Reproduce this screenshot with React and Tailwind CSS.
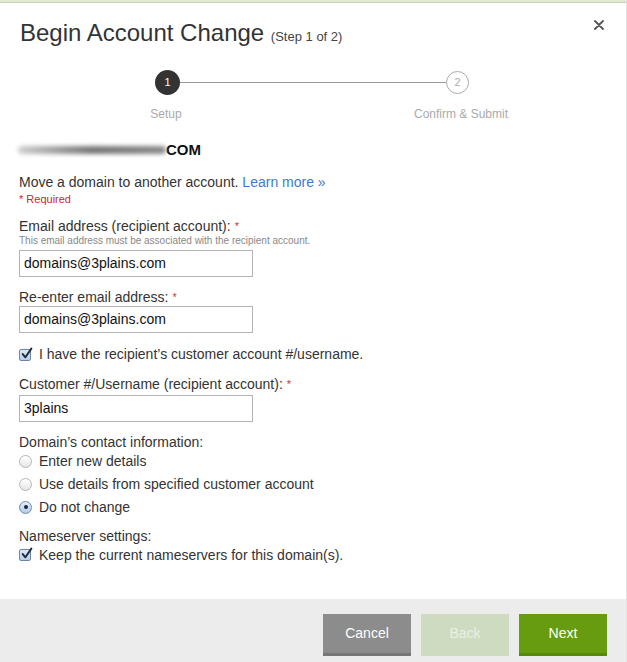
import React from "react";

function Checkbox() {
  return (
    <span className="relative inline-block w-[12px] h-[12px] rounded-[2px] border border-[#6d87a8] bg-gradient-to-b from-[#dbe7f6] to-[#b9cfe9] shrink-0">
      <svg viewBox="0 0 12 12" className="absolute -top-[3px] left-[0px] w-[13px] h-[13px]">
        <path d="M2.5 6.5 L5 9.5 L10.5 1.5" fill="none" stroke="#1d2a3d" strokeWidth="1.8" strokeLinecap="round" strokeLinejoin="round" />
      </svg>
    </span>
  );
}

function Radio({ checked }) {
  return (
    <span
      className={`inline-flex items-center justify-center w-[13px] h-[13px] rounded-full border shrink-0 ${
        checked
          ? "border-[#6b8cb8] bg-gradient-to-b from-[#e3edf9] to-[#b5cbe6]"
          : "border-[#b5b5b5] bg-gradient-to-b from-[#ffffff] to-[#e6e6e6]"
      }`}
    >
      {checked && <span className="w-[4px] h-[4px] rounded-full bg-[#1c2633]" />}
    </span>
  );
}

function TextInput({ value, className = "" }) {
  return (
    <div className={`w-[234px] h-[27px] border border-[#b4b4b4] px-[4px] flex items-center text-[14px] text-[#111] ${className}`}>
      {value}
    </div>
  );
}

function Label({ children, required }) {
  return (
    <p className="text-[14px] leading-[18px] text-[#333]">
      {children}
      {required && <span className="text-[#c33] text-[11px] align-top ml-[4px]">*</span>}
    </p>
  );
}

export default function App() {
  return (
    <div
      className="w-[627px] h-[662px] bg-white flex flex-col border-r border-[#e2e2e2]"
      style={{ fontFamily: '"Liberation Sans", Arial, sans-serif' }}
    >
      <div className="h-[3px] bg-[#e1ebd2] border-b border-[#c7cfbf]" />

      {/* Header */}
      <div className="flex items-start justify-between pl-[20px] pr-[22px] pt-[14px]">
        <h1 className="text-[24px] leading-[32px] text-[#333] font-light">
          Begin Account Change{" "}
          <span className="text-[13px] text-[#444]">(Step 1 of 2)</span>
        </h1>
        <svg viewBox="0 0 10 10" className="w-[10px] h-[10px] mt-[3px]">
          <path d="M1 1 L9 9 M9 1 L1 9" stroke="#555" strokeWidth="1.8" strokeLinecap="round" />
        </svg>
      </div>

      {/* Stepper */}
      <div className="flex items-center pl-[155px] mt-[17px]">
        <span className="w-[25px] h-[25px] rounded-full bg-[#333] text-white text-[11px] flex items-center justify-center">1</span>
        <span className="w-[266px] h-px bg-[#9a9a9a]" />
        <span className="w-[23px] h-[23px] rounded-full border border-[#aaa] text-[#aaa] text-[11px] flex items-center justify-center">2</span>
      </div>
      <div className="flex mt-[11px] text-[12px] leading-[16px] text-[#aaa]">
        <span className="ml-[116px] w-[100px] text-center">Setup</span>
        <span className="ml-[185px] w-[120px] text-center">Confirm &amp; Submit</span>
      </div>

      {/* Form */}
      <div className="px-[19px] mt-[18px]">
        <div className="flex items-center h-[20px]">
          <span className="w-[148px] h-[8px] rounded-full bg-gradient-to-r from-[#cfcfcf] via-[#767676] to-[#8a8a8a] blur-[2px] -ml-[1px]" />
          <span className="text-[15px] font-bold text-[#111]">COM</span>
        </div>

        <p className="text-[14px] leading-[18px] text-[#333] mt-[13px]">
          Move a domain to another account.{" "}
          <span className="text-[#3a7bd5]">Learn more »</span>
        </p>
        <p className="text-[11px] leading-[14px] text-[#c62828] mt-[1px]">* Required</p>

        <div className="mt-[11px]">
          <Label required>Email address (recipient account):</Label>
          <p className="text-[10px] leading-[12px] text-[#888]">
            This email address must be associated with the recipient account.
          </p>
          <TextInput value="domains@3plains.com" className="mt-[3px]" />
        </div>

        <div className="mt-[11px]">
          <Label required>Re-enter email address:</Label>
          <TextInput value="domains@3plains.com" />
        </div>

        <div className="flex items-center gap-[8px] mt-[11px] text-[14px] text-[#333]">
          <Checkbox />
          <span>I have the recipient’s customer account #/username.</span>
        </div>

        <div className="mt-[10px]">
          <Label required>Customer #/Username (recipient account):</Label>
          <TextInput value="3plains" className="mt-[2px]" />
        </div>

        <div className="mt-[11px] text-[14px] leading-[18px] text-[#333]">
          <p>Domain’s contact information:</p>
          <div className="flex flex-col gap-[5px] mt-[1px]">
            <div className="flex items-center gap-[7px]">
              <Radio />
              <span>Enter new details</span>
            </div>
            <div className="flex items-center gap-[7px]">
              <Radio />
              <span>Use details from specified customer account</span>
            </div>
            <div className="flex items-center gap-[7px]">
              <Radio checked />
              <span>Do not change</span>
            </div>
          </div>
        </div>

        <div className="mt-[11px] text-[14px] leading-[18px] text-[#333]">
          <p>Nameserver settings:</p>
          <div className="flex items-center gap-[8px] mt-[1px]">
            <Checkbox />
            <span>Keep the current nameservers for this domain(s).</span>
          </div>
        </div>
      </div>

      {/* Footer */}
      <div className="mt-auto h-[63px] bg-[#ececec] flex items-start justify-end gap-[10px] pr-[19px] pt-[15px]">
        <button className="w-[88px] h-[42px] bg-[#8c8c8c] border-b-[3px] border-[#777] text-white text-[14px]">Cancel</button>
        <button className="w-[88px] h-[42px] bg-[#cfdbc1] border-b-[3px] border-[#cfdbc1] text-[#e9efe2] text-[14px]">Back</button>
        <button className="w-[88px] h-[42px] bg-[#679b10] border-b-[3px] border-[#578a0b] text-white text-[14px]">Next</button>
      </div>
    </div>
  );
}
